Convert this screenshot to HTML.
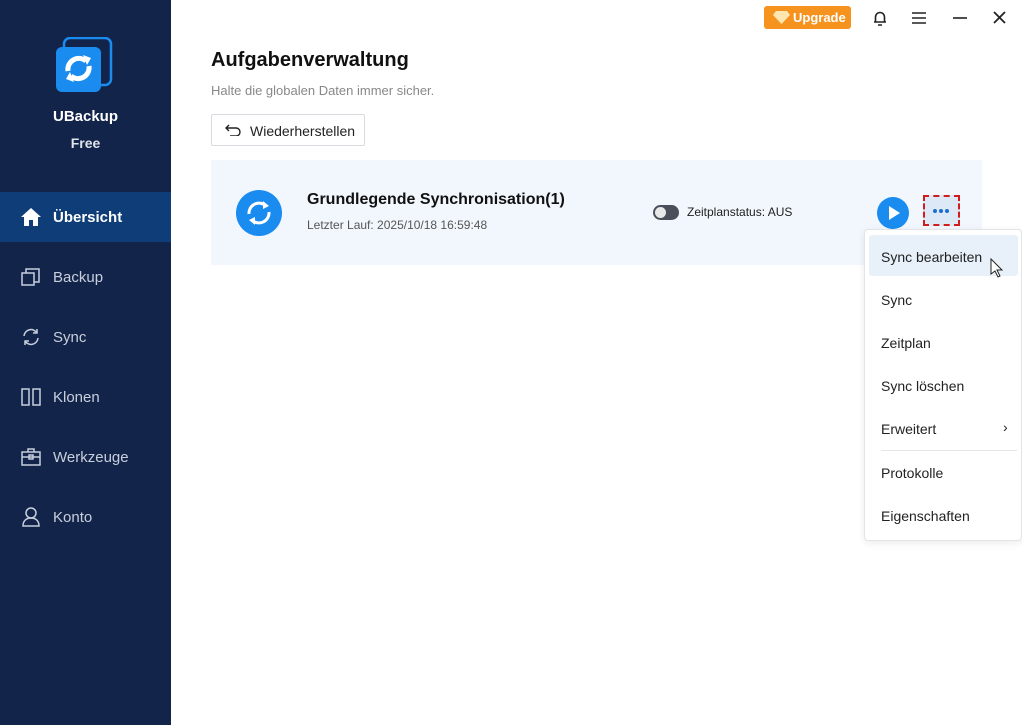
<!DOCTYPE html>
<html><head><meta charset="utf-8"><style>
*{margin:0;padding:0;box-sizing:border-box}
body{width:1022px;height:725px;overflow:hidden;font-family:"Liberation Sans",sans-serif;background:#fff;position:relative}
.side{position:absolute;left:0;top:0;width:171px;height:725px;background:#13244a}
.abs{position:absolute}
.nav{position:absolute;left:0;width:171px;height:50px;color:#c8cfdc;font-size:15px;display:flex;align-items:center;padding-left:53px}
.nav svg{position:absolute;left:21px;top:15px}
.menu{position:absolute;left:864px;top:229px;width:158px;height:312px;background:#fff;border:1px solid #e2e4e8;border-radius:4px;box-shadow:0 2px 8px rgba(0,0,0,.08)}
.mi{position:absolute;left:16px;font-size:14px;color:#222}
</style></head><body>
<div class="side">
  <svg class="abs" style="left:54px;top:37px" width="60" height="58" viewBox="0 0 60 58">
    <rect x="10" y="1" width="47" height="47" rx="6" fill="none" stroke="#1a8cf0" stroke-width="2.5"/>
    <rect x="2" y="10" width="45" height="45" rx="6" fill="#1a8cf0"/>
    <path d="M14 34a11 11 0 0 1 18-10" stroke="#fff" stroke-width="5" fill="none"/>
    <path d="M35 29a11 11 0 0 1-18 10" stroke="#fff" stroke-width="5" fill="none"/>
    <path d="M29 18l8 3-4 7z" fill="#fff"/><path d="M20 45l-8-3 4-7z" fill="#fff"/>
  </svg>
  <div class="abs" style="left:0;width:171px;top:108px;text-align:center;color:#fff;font-weight:bold;font-size:15px">UBackup</div>
  <div class="abs" style="left:0;width:171px;top:135px;text-align:center;color:#dfe3ea;font-weight:bold;font-size:14px">Free</div>
  <div class="nav" style="top:192px;background:#0e3d78;color:#fff;font-weight:bold">Übersicht
    <svg width="20" height="20" viewBox="0 0 20 20"><path d="M10 1L0 10h3v9h5v-6h4v6h5v-9h3z" fill="#fff"/></svg></div>
  <div class="nav" style="top:252px">Backup<svg width="20" height="20" viewBox="0 0 20 20" fill="none" stroke="#c8cfdc" stroke-width="1.5"><rect x="1" y="6" width="12" height="12"/><path d="M5 6V2h13v13h-5"/></svg></div>
  <div class="nav" style="top:312px">Sync<svg width="20" height="20" viewBox="0 0 20 20" fill="none" stroke="#c8cfdc" stroke-width="1.5"><path d="M3 9a7 7 0 0 1 13-3M17 11a7 7 0 0 1-13 3M16 2v4h-4M4 18v-4h4"/></svg></div>
  <div class="nav" style="top:372px">Klonen<svg width="20" height="20" viewBox="0 0 20 20" fill="none" stroke="#c8cfdc" stroke-width="1.5"><rect x="1" y="2" width="7" height="16"/><rect x="12" y="2" width="7" height="16"/></svg></div>
  <div class="nav" style="top:432px">Werkzeuge<svg width="20" height="20" viewBox="0 0 20 20" fill="none" stroke="#c8cfdc" stroke-width="1.5"><rect x="1" y="5" width="18" height="13"/><path d="M7 5V2h6v3M1 10h18"/><rect x="8" y="8" width="4" height="4"/></svg></div>
  <div class="nav" style="top:492px">Konto<svg width="20" height="20" viewBox="0 0 20 20" fill="none" stroke="#c8cfdc" stroke-width="1.5"><circle cx="10" cy="6" r="5"/><path d="M2 19c0-5 3-8 8-8s8 3 8 8z"/></svg></div>
</div>

<div class="abs" style="left:764px;top:6px;width:87px;height:23px;background:#f5931e;border-radius:3px;color:#fff;font-size:13px;font-weight:bold;padding:4px 0 0 29px">Upgrade
  <svg class="abs" style="left:9px;top:5px" width="17" height="13" viewBox="0 0 17 13"><path d="M3 0h11l3 4-8.5 9L0 4z" fill="#ffe6b0"/></svg></div>
<svg class="abs" style="left:871px;top:9px" width="18" height="18" viewBox="0 0 18 18" fill="none" stroke="#222" stroke-width="1.6"><path d="M3 13h12M4.5 13V8a4.5 4.5 0 0 1 9 0v5M7 16h4"/></svg>
<svg class="abs" style="left:912px;top:11px" width="14" height="14" viewBox="0 0 14 14" stroke="#222" stroke-width="1.6"><path d="M0 2h14M0 7h14M0 12h14"/></svg>
<svg class="abs" style="left:953px;top:11px" width="14" height="14" viewBox="0 0 14 14" stroke="#222" stroke-width="1.6"><path d="M0 7h14"/></svg>
<svg class="abs" style="left:993px;top:11px" width="13" height="13" viewBox="0 0 13 13" stroke="#222" stroke-width="1.8"><path d="M1 1l11 11M12 1L1 12"/></svg>

<div class="abs" style="left:211px;top:49px;font-size:20px;font-weight:bold;color:#111">Aufgabenverwaltung</div>
<div class="abs" style="left:211px;top:83px;font-size:13px;color:#888">Halte die globalen Daten immer sicher.</div>
<div class="abs" style="left:211px;top:114px;width:154px;height:32px;border:1px solid #d8dbe0;border-radius:2px;font-size:14px;color:#222;padding:8px 0 0 38px">Wiederherstellen
  <svg class="abs" style="left:13px;top:9px" width="16" height="12" viewBox="0 0 16 12" fill="none" stroke="#222" stroke-width="1.4"><path d="M4 1L1 4l3 3M1 4h10a4 4 0 0 1 0 8H5"/></svg></div>

<div class="abs" style="left:211px;top:160px;width:771px;height:105px;background:#f2f7fd"></div>
<svg class="abs" style="left:236px;top:190px" width="46" height="46" viewBox="0 0 46 46"><circle cx="23" cy="23" r="23" fill="#1a8cf0"/>
  <path d="M13 24a10 10 0 0 1 17-8M33 22a10 10 0 0 1-17 8" stroke="#fff" stroke-width="3" fill="none"/>
  <path d="M27 11l6 5-6 3zM19 35l-6-5 6-3z" fill="#fff"/></svg>
<div class="abs" style="left:307px;top:191px;font-size:16px;font-weight:bold;color:#111">Grundlegende Synchronisation(1)</div>
<div class="abs" style="left:307px;top:218px;font-size:12px;color:#555">Letzter Lauf: 2025/10/18 16:59:48</div>
<div class="abs" style="left:653px;top:205px;width:26px;height:15px;border-radius:8px;background:#4a4f5a"></div>
<div class="abs" style="left:655px;top:207px;width:11px;height:11px;border-radius:50%;background:#e8e8e8"></div>
<div class="abs" style="left:687px;top:205px;font-size:12px;color:#222">Zeitplanstatus: AUS</div>
<svg class="abs" style="left:877px;top:197px" width="32" height="32" viewBox="0 0 32 32"><circle cx="16" cy="16" r="16" fill="#1a8cf0"/><path d="M12 9l11 7-11 7z" fill="#fff"/></svg>
<div class="abs" style="left:923px;top:195px;width:37px;height:31px;border:2px dashed #d01c1c;background:#dde9f7"></div>
<div class="abs" style="left:933px;top:209px;font-size:0">
  <span style="display:inline-block;width:4px;height:4px;border-radius:50%;background:#1a6fd0;margin-right:2px"></span><span style="display:inline-block;width:4px;height:4px;border-radius:50%;background:#1a6fd0;margin-right:2px"></span><span style="display:inline-block;width:4px;height:4px;border-radius:50%;background:#1a6fd0"></span></div>

<div class="menu">
  <div class="abs" style="left:4px;top:5px;width:149px;height:41px;background:#e8f0fa;border-radius:3px"></div>
  <div class="mi" style="top:19px">Sync bearbeiten</div>
  <div class="mi" style="top:62px">Sync</div>
  <div class="mi" style="top:105px">Zeitplan</div>
  <div class="mi" style="top:148px">Sync löschen</div>
  <div class="mi" style="top:191px">Erweitert</div>
  <div class="mi" style="top:189px;left:138px">›</div>
  <div class="abs" style="left:16px;top:220px;width:136px;height:1px;background:#e6e6e6"></div>
  <div class="mi" style="top:235px">Protokolle</div>
  <div class="mi" style="top:278px">Eigenschaften</div>
</div>
<svg class="abs" style="left:990px;top:258px" width="14" height="20" viewBox="0 0 14 20"><path d="M1 1v15l4-3 3 6 2-1-3-6h5z" fill="#fff" stroke="#222" stroke-width="1"/></svg>
</body></html>
